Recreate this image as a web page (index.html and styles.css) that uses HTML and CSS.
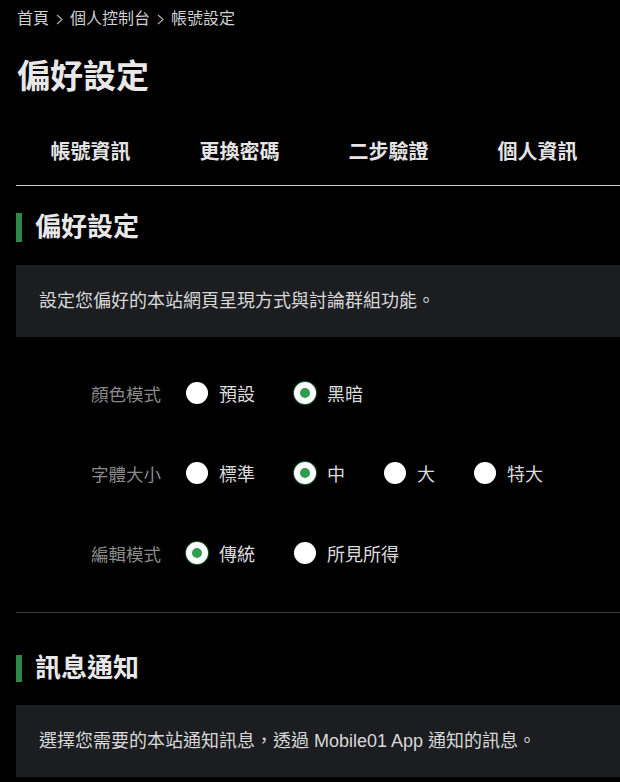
FILE: index.html
```html
<!DOCTYPE html>
<html lang="zh-Hant">
<head>
    <meta charset="UTF-8">
    <meta name="viewport" content="width=device-width, initial-scale=1.0">
    <title>偏好設定</title>
    <link rel="stylesheet" href="styles.css">
</head>
<body>
    <div class="container">
        <div class="breadcrumb">
            <a href="#">首頁</a>
            <svg class="sep" width="7" height="11" viewBox="0 0 7 11"><polyline points="1,1 6,5.5 1,10" fill="none" stroke="#b0b0b0" stroke-width="1.2"/></svg>
            <a href="#">個人控制台</a>
            <svg class="sep" width="7" height="11" viewBox="0 0 7 11"><polyline points="1,1 6,5.5 1,10" fill="none" stroke="#b0b0b0" stroke-width="1.2"/></svg>
            <span>帳號設定</span>
        </div>

        <h1 class="page-title">偏好設定</h1>

        <nav class="tabs">
            <a href="#">帳號資訊</a>
            <a href="#">更換密碼</a>
            <a href="#">二步驗證</a>
            <a href="#">個人資訊</a>
        </nav>

        <h2 class="section-title">偏好設定</h2>
        <div class="desc">設定您偏好的本站網頁呈現方式與討論群組功能。</div>

        <form class="settings">
            <div class="row">
                <span class="row-label">顏色模式</span>
                <label class="option"><input type="radio" name="color"> 預設</label>
                <label class="option"><input type="radio" name="color" checked> 黑暗</label>
            </div>
            <div class="row">
                <span class="row-label">字體大小</span>
                <label class="option"><input type="radio" name="size"> 標準</label>
                <label class="option"><input type="radio" name="size" checked> 中</label>
                <label class="option"><input type="radio" name="size"> 大</label>
                <label class="option"><input type="radio" name="size"> 特大</label>
            </div>
            <div class="row">
                <span class="row-label">編輯模式</span>
                <label class="option"><input type="radio" name="editor" checked> 傳統</label>
                <label class="option"><input type="radio" name="editor"> 所見所得</label>
            </div>
        </form>

        <h2 class="section-title second">訊息通知</h2>
        <div class="desc">選擇您需要的本站通知訊息，透過 Mobile01 App 通知的訊息。</div>
    </div>
</body>
</html>
```

FILE: styles.css
```css
html, body {
    margin: 0;
    background: #000;
    overflow: hidden;
}
body {
    font-family: 'Liberation Sans', 'Noto Sans CJK TC', sans-serif;
    color: #e0e0e0;
}
.container {
    padding-left: 16px;
    width: 604px;
    overflow: hidden;
}
a {
    color: inherit;
    text-decoration: none;
}
.breadcrumb {
    display: flex;
    align-items: center;
    font-size: 16px;
    line-height: 22px;
    padding-top: 8px;
    padding-left: 1px;
    color: #d0d0d0;
}
.breadcrumb .sep {
    margin: 0 7px;
}
.page-title {
    margin: 27px 0 0 1px;
    font-size: 33px;
    line-height: 40px;
    font-weight: bold;
    color: #e8e8e8;
}
.tabs {
    margin-top: 37px;
    display: grid;
    grid-template-columns: repeat(4, 149px);
    padding-bottom: 15px;
    border-bottom: 1px solid #c8d0c8;
}
.tabs a {
    text-align: center;
    font-size: 20px;
    line-height: 36px;
    font-weight: bold;
    color: #e4e4e4;
}
.section-title {
    margin: 27px 0 0;
    border-left: 6px solid #2e8b47;
    padding-left: 13px;
    font-size: 26px;
    line-height: 29px;
    font-weight: bold;
    color: #e8e8e8;
}
.section-title.second {
    margin-top: 42px;
    line-height: 27px;
}
.desc {
    margin-top: 23px;
    background: #1b1d20;
    padding: 0 23px;
    height: 72px;
    line-height: 72px;
    font-size: 18px;
    color: #d8d8d8;
    white-space: nowrap;
}
.section-title.second + .desc {
    margin-top: 23px;
}
.settings {
    margin: 0;
    padding: 36px 0 39px 75px;
    border-bottom: 1px solid #3a3a3a;
    display: flex;
    flex-direction: column;
    gap: 40px;
}
.row {
    display: flex;
    align-items: center;
    height: 40px;
}
.row-label {
    width: 95px;
    font-size: 17.5px;
    color: #8a8a8a;
}
.option {
    display: flex;
    align-items: center;
    font-size: 18px;
    color: #dcdcdc;
    margin-right: 39px;
}
.option input {
    appearance: none;
    -webkit-appearance: none;
    margin: 0 11px 0 0;
    width: 22px;
    height: 22px;
    border-radius: 50%;
    background: #fff;
    box-sizing: border-box;
}
.option input:checked {
    border: 6px solid #fff;
    background: #2e9e50;
    box-shadow: 0 0 0 1px #1d5a2e;
}
```
